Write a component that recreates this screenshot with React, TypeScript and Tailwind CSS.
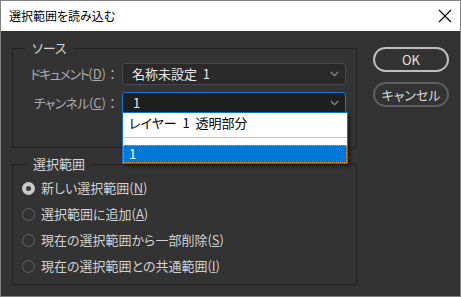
const Chevron = () => (
  <svg width="9" height="6" viewBox="0 0 9 6" className="shrink-0">
    <path d="M0.8 1L4.5 4.6L8.2 1" stroke="#8c8c8c" strokeWidth="1.2" fill="none" />
  </svg>
);

function Radio({ checked, children }: { checked?: boolean; children: React.ReactNode }) {
  return (
    <div className="h-[26px] flex items-center pl-[9px] gap-[6px]">
      {checked ? (
        <div className="w-[13px] h-[13px] rounded-full bg-[#c9c9c9] flex items-center justify-center shrink-0">
          <div className="w-[5px] h-[5px] rounded-full bg-[#3c3c3c]" />
        </div>
      ) : (
        <div className="w-[13px] h-[13px] rounded-full border border-[#666666] shrink-0" />
      )}
      <span className="text-[13px] leading-[16px] text-[#d2d2d2] whitespace-nowrap">{children}</span>
    </div>
  );
}

export default function App() {
  return (
    <div className="w-[461px] h-[297px] border border-[#808080] flex flex-col font-['Noto_Sans_CJK_JP',sans-serif] [font-feature-settings:'palt'] overflow-hidden">
      <div className="h-[30px] bg-white flex items-center justify-between pl-[8px] pr-[8px] shrink-0">
        <span className="text-[12px] leading-none text-black">選択範囲を読み込む</span>
        <svg width="14" height="14" viewBox="0 0 14 14">
          <path d="M1 1L13 13M13 1L1 13" stroke="#000" strokeWidth="1.1" />
        </svg>
      </div>
      <div className="flex-1 bg-[#333333] flex">
        <div className="ml-[11px] w-[345px] flex flex-col">
          <fieldset className="mt-[9px] h-[108px] border border-[#242424]">
            <legend className="ml-[13px] px-[6px] text-[13px] leading-[16px] text-[#d4d4d4]">ソース</legend>
            <div className="mt-[7px] h-[22px] flex items-center">
              <div className="w-[106px] text-right text-[13px] leading-[16px] text-[#ababab] whitespace-nowrap">
                <span className="tracking-[-1.4px]">ドキュメント</span>(<span className="underline">D</span>)<span className="[font-feature-settings:normal]">：</span>
              </div>
              <div className="ml-[3px] w-[224px] h-[22px] rounded-[3px] border border-[#494949] bg-[#2a2a2a] flex items-center justify-between pl-[9px] pr-[6px]">
                <span className="text-[13px] leading-[16px] text-[#e8e8e8] whitespace-pre">名称未設定  1</span>
                <Chevron />
              </div>
            </div>
            <div className="mt-[7px] h-[22px] flex items-center">
              <div className="w-[106px] text-right text-[13px] leading-[16px] text-[#ababab] whitespace-nowrap">
                <span className="tracking-[-0.6px]">チャンネル</span>(<span className="underline">C</span>)<span className="[font-feature-settings:normal]">：</span>
              </div>
              <div className="ml-[3px] w-[224px] h-[22px] relative">
                <div className="h-full rounded-[3px] border border-[#1473d6] bg-[#1f1f1f] flex items-center justify-between pl-[10px] pr-[6px]">
                  <span className="text-[13px] leading-[16px] text-[#f0f0f0]">1</span>
                  <Chevron />
                </div>
                <div className="absolute top-[20px] left-0 w-[226px] z-10 border border-[#0a74d8] bg-white shadow-[2px_2px_3px_rgba(0,0,0,0.45)] flex flex-col">
                  <div className="h-[19px] flex items-center pl-[6px] text-[13px] leading-[16px] text-black whitespace-pre">
                    レイヤー  1  透明部分
                  </div>
                  <div className="h-[5px]" />
                  <div className="h-[1px] bg-[#c2c2c2]" />
                  <div className="h-[7px]" />
                  <div className="h-[18px] bg-[#0078d7] border border-dotted border-[#f0a040] flex items-center pl-[5px] text-[13px] leading-[16px] text-white">
                    1
                  </div>
                </div>
              </div>
            </div>
          </fieldset>
          <fieldset className="mt-[8px] h-[129px] border border-[#242424]">
            <legend className="ml-[14px] px-[6px] text-[13px] leading-[16px] text-[#d4d4d4]">選択範囲</legend>
            <div className="mt-[3px] flex flex-col">
              <Radio checked>
                新しい選択範囲(<span className="underline">N</span>)
              </Radio>
              <Radio>
                選択範囲に追加(<span className="underline">A</span>)
              </Radio>
              <Radio>
                現在の選択範囲から一部削除(<span className="underline">S</span>)
              </Radio>
              <Radio>
                現在の選択範囲との共通範囲(<span className="underline">I</span>)
              </Radio>
            </div>
          </fieldset>
        </div>
        <div className="ml-[16px] mt-[16px] w-[76px] flex flex-col gap-[10px]">
          <div className="h-[25px] rounded-full border-2 border-[#bebebe] flex items-center justify-center text-[13px] leading-[16px] text-[#e2e2e2]">
            OK
          </div>
          <div className="h-[25px] rounded-full border-2 border-[#5e5e5e] flex items-center justify-center text-[13px] leading-[16px] text-[#dadada]">
            キャンセル
          </div>
        </div>
      </div>
    </div>
  );
}
